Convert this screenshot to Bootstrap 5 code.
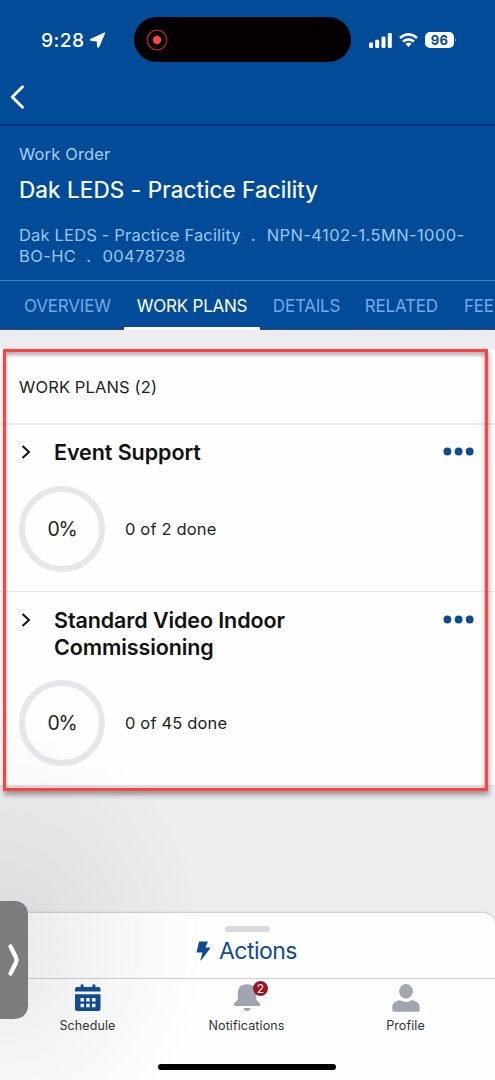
<!DOCTYPE html>
<html lang="en">
<head>
<meta charset="utf-8">
<meta name="viewport" content="width=device-width, initial-scale=1">
<title>Work Order</title>
<link href="https://cdn.jsdelivr.net/npm/bootstrap@5.3.0/dist/css/bootstrap.min.css" rel="stylesheet">
<style>
body{font-family:Inter,"Liberation Sans",sans-serif;width:495px;height:1080px;overflow:hidden;background:#edecef;color:#1f1f21}
svg{display:block;flex:none}
.brand{background:#024b98}
.topbar{height:126px;border-bottom:2px solid #00337c}
.status{height:79px;padding-left:41px}
.clock{font-size:19.3px;font-weight:500;line-height:22px;width:45px;letter-spacing:.35px;padding-top:1px}
.island{width:217px;height:45px;margin-left:28px;padding-left:12px;background:#040002}
.signal{margin-left:18px;margin-top:1px}
.wifi{margin-left:7px}
.batt{width:29px;height:16px;border-radius:5px;margin-left:7px;margin-top:1px;background:#fff;color:#024b98;font-size:13px;font-weight:700;line-height:16px;letter-spacing:.3px}
.back{margin-left:9px;margin-top:5px}
.record{padding:18px 19px 0;height:154px}
.kind{font-size:16.5px;line-height:20px;letter-spacing:.15px;color:#a9cdf5}
.ttl{font-size:22.5px;line-height:30px;font-weight:400;-webkit-text-stroke:.2px #fff;margin-top:11px;letter-spacing:.11px}
.sub{font-size:16.5px;line-height:21px;letter-spacing:.17px;color:#9cc5f3;margin-top:19.5px}
.sub .sep{margin:0 11px 0 10px}
.sub .code{letter-spacing:.4px}
.tabs{height:50px;border-top:1px solid #3c7dc2;font-size:17px;line-height:50px;letter-spacing:-.2px;color:#76a9e2;overflow:hidden}
.tabs a{color:inherit;text-decoration:none;flex:none;white-space:nowrap;height:49px;box-shadow:inset 0 -1px #3d4675}
.tabs .on{color:#fff;box-shadow:inset 0 -3px #fff;letter-spacing:-.22px}
.plans{margin-top:19px;height:437px;background:#fefefe;border-bottom:1px solid #e4e3e7}
.phead{height:76px;line-height:76px;padding-left:19px;font-size:16.5px;letter-spacing:.13px;border-bottom:2px solid #ebebed}
.plan{padding:14px 21.5px 0 19px}
.plan + .plan{border-top:1px solid #e8e8ea;padding-top:15px;margin-top:19px}
.nm{font-size:21.5px;font-weight:600;line-height:26.3px;letter-spacing:-.07px;color:#111;margin-left:20px}
.nm.long{letter-spacing:-.1px}
.gauge{margin-top:21px}
.plan + .plan .gauge{margin-top:20px}
.ring{width:86px;height:86px;border:6px solid #e6e6eb;border-radius:50%;font-size:19.5px;letter-spacing:-1.1px;padding-top:1px}
.count{font-size:16.5px;letter-spacing:.15px;margin-left:20px;padding-top:1px}
.frame{left:3px;top:349px;width:485px;height:442px;border:3px solid #fd4343;box-shadow:1px 4px 5px rgba(0,0,0,.36),inset 0 4px 3px rgba(0,0,0,.2),inset -1px 0 4px rgba(0,0,0,.22)}
.shade{left:0;top:700px;width:220px;height:380px;background:radial-gradient(ellipse at 0 64%,rgba(80,78,85,.12),rgba(80,78,85,.04) 40%,rgba(80,78,85,0) 66%)}
.sheet{left:0;top:913px;width:495px;height:167px;background:#fefefe;border-radius:12px 12px 0 0;box-shadow:0 -1px 2px rgba(0,0,0,.16)}
.act{height:66px;padding-top:13px;border-bottom:1px solid #cfcfd3;color:#0d4b94}
.grip{width:45px;height:6px;background:#d9d8dc}
.actlabel{font-size:23px;line-height:30px;letter-spacing:-.52px;margin-top:4px;margin-right:2px}
.item{font-size:12.5px;line-height:16px;letter-spacing:.1px;color:#333336;width:159px;padding-top:5px}
.item svg{margin-bottom:6px}
.alertdot{left:86px;top:2px;width:15px;height:15px;background:#9c1424;font-size:12px;line-height:15px}
.home{left:158px;top:1064px;width:178px;height:6px;background:#000}
.drawer{left:0;top:901px;width:28px;height:118px;border-radius:0 13px 13px 0;background:#7d7b7e}
</style>
</head>
<body class="position-relative">
<header class="brand text-white">
  <div class="topbar">
    <div class="status d-flex align-items-center">
      <span class="clock">9:28</span>
      <svg class="ms-1" width="16" height="16" viewBox="0 0 16 16"><path d="M14.6 1 L1 7.2 Q.2 8.2 1.3 8.5 L7.3 8.9 L7.6 14.6 Q8 15.6 8.8 14.6Z" fill="#fff" stroke="#fff" stroke-width="1.1" stroke-linejoin="round"/></svg>
      <span class="island rounded-pill d-flex align-items-center"><svg width="22" height="22" viewBox="0 0 22 22"><circle cx="11" cy="11" r="9.8" fill="none" stroke="#a52f31" stroke-width="1.3"/><circle cx="11" cy="11" r="4.2" fill="#fb4542"/></svg></span>
      <svg class="signal" width="23" height="15" viewBox="0 0 23 15" fill="#fff"><rect y="9.5" width="4" height="5.5" rx="1.2"/><rect x="6.2" y="6.8" width="4" height="8.2" rx="1.2"/><rect x="12.5" y="3.5" width="4" height="11.5" rx="1.2"/><rect x="18.8" width="4" height="15" rx="1.2"/></svg>
      <svg class="wifi" width="19" height="14" viewBox="0 0 19 14" fill="none" stroke="#fff" stroke-width="2.6"><path d="M1 5 Q9.5 -2.3 18 5M4 8.6 Q9.5 4 15 8.6"/><path d="M6.4 10.8 Q9.5 8.3 12.6 10.8 L9.5 14Z" fill="#fff" stroke="none"/></svg>
      <span class="batt text-center">96</span><svg width="3" height="6" viewBox="0 0 3 6"><path d="M1 1 Q3 3 1 5Z" fill="#7aa6d4"/></svg>
    </div>
    <svg class="back" width="16" height="26" viewBox="0 0 16 26"><path d="M13.5 2.8 L3.2 13 L13.5 23.2" fill="none" stroke="#fff" stroke-width="2.9" stroke-linecap="round" stroke-linejoin="round"/></svg>
  </div>
  <div class="record">
    <div class="kind">Work Order</div>
    <div class="ttl">Dak LEDS - Practice Facility</div>
    <div class="sub text-nowrap">Dak LEDS - Practice Facility<span class="sep">.</span><span class="code">NPN-4102-1.5MN-1000-<br>BO-HC<span class="sep">.</span>00478738</span></div>
  </div>
  <nav class="tabs d-flex">
    <a style="padding:0 13px 0 24px">OVERVIEW</a><a class="on" style="padding:0 13px">WORK PLANS</a><a style="padding:0 12.5px">DETAILS</a><a style="padding:0 12px">RELATED</a><a style="padding-left:14px">FEE</a>
  </nav>
</header>
<main class="plans">
  <div class="phead">WORK PLANS (2)</div>
  <section class="plan">
    <div class="d-flex align-items-start">
      <svg class="mt-1" width="15" height="18" viewBox="0 0 15 18"><path d="M3.5 3 L10 9 L3.5 15" fill="none" stroke="#111" stroke-width="2"/></svg>
      <div class="nm">Event Support</div>
      <svg class="ms-auto" style="margin-top:8px" width="31" height="9" viewBox="0 0 31 9" fill="#0c4a93"><circle cx="4.4" cy="4.5" r="3.9"/><circle cx="15.6" cy="4.5" r="3.9"/><circle cx="26.7" cy="4.5" r="3.9"/></svg>
    </div>
    <div class="gauge d-flex align-items-center"><div class="ring d-flex align-items-center justify-content-center">0%</div><span class="count">0 of 2 done</span></div>
  </section>
  <section class="plan">
    <div class="d-flex align-items-start">
      <svg class="mt-1" width="15" height="18" viewBox="0 0 15 18"><path d="M3.5 3 L10 9 L3.5 15" fill="none" stroke="#111" stroke-width="2"/></svg>
      <div class="nm long">Standard Video Indoor<br>Commissioning</div>
      <svg class="ms-auto" style="margin-top:8px" width="31" height="9" viewBox="0 0 31 9" fill="#0c4a93"><circle cx="4.4" cy="4.5" r="3.9"/><circle cx="15.6" cy="4.5" r="3.9"/><circle cx="26.7" cy="4.5" r="3.9"/></svg>
    </div>
    <div class="gauge d-flex align-items-center"><div class="ring d-flex align-items-center justify-content-center">0%</div><span class="count">0 of 45 done</span></div>
  </section>
</main>
<div class="frame position-absolute"></div>
<footer class="sheet position-absolute">
  <div class="act d-flex flex-column align-items-center">
    <span class="grip rounded-pill"></span>
    <div class="actlabel d-flex align-items-center"><svg width="15" height="20" viewBox="0 0 15 20" style="margin-right:8px"><path d="M3.8 .5 H12 L9.4 6.6 H14 Q14.6 6.8 14.1 7.5 L5.2 19.2 Q4.3 19.8 4.5 18.8 L6.5 11.6 H1.2 Q.5 11.5 .7 10.7 L3 1.1Z" fill="#0d4b94"/></svg>Actions</div>
  </div>
  <nav class="d-flex" style="padding-left:8px">
    <div class="item d-flex flex-column align-items-center">
      <svg width="26" height="28" viewBox="0 0 26 28"><path fill="#0d4b94" fill-rule="evenodd" d="M0 7.5 V5 Q0 3 2 3 H5.6 V1.5 Q5.6 .3 7.1 .3 T8.6 1.5 V3 H17.4 V1.5 Q17.4 .3 18.9 .3 T20.4 1.5 V3 H23.5 Q25.5 3 25.5 5 V7.5ZM0 10.3 H25.5 V25 Q25.5 27 23.5 27 H2 Q0 27 0 25ZM5.5 14 V17.5 H9 V14ZM11.2 14 V17.5 H14.7 V14ZM17 14 V17.5 H20.5 V14ZM5.5 19.7 V23.2 H9 V19.7ZM11.2 19.7 V23.2 H14.7 V19.7ZM17 19.7 V23.2 H20.5 V19.7Z"/></svg>
      Schedule
    </div>
    <div class="item d-flex flex-column align-items-center position-relative">
      <svg width="28" height="28" viewBox="0 0 28 28" fill="#9fa5b3"><path d="M14 .3 Q23 .3 23.2 9 V14 Q23.2 17 26.5 18.8 Q28.4 21.6 26 22 H2 Q-.4 21.6 1.5 18.8 Q4.8 17 4.8 14 V9 Q5 .3 14 .3ZM10.5 24 H17.5 Q17 27 14 27 T10.5 24Z"/></svg>
      Notifications
      <span class="alertdot position-absolute rounded-circle text-white text-center">2</span>
    </div>
    <div class="item d-flex flex-column align-items-center">
      <svg width="28" height="28" viewBox="0 0 28 28"><ellipse cx="14" cy="7.4" rx="6.8" ry="7.3" fill="#a5a8ad"/><path d="M.3 26 V23 Q.5 19 4.5 17.3 L7.8 16 Q14 20.2 20.2 16 L23.5 17.3 Q27.5 19 27.7 23 V26 Q27.6 27.8 26 27.8 H2 Q.4 27.8 .3 26Z" fill="#9fa5b3"/></svg>
      Profile
    </div>
  </nav>
</footer>
<div class="shade position-absolute"></div>
<div class="home position-absolute rounded-pill"></div>
<div class="drawer position-absolute d-flex align-items-center"><svg width="28" height="36" viewBox="0 0 28 36"><path d="M10.5 4.5 L16 15.5 Q17 18 16 20.5 L10.5 31.5" fill="none" stroke="#fff" stroke-width="4.3" stroke-linecap="round" stroke-linejoin="round"/></svg></div>
<script src="https://cdn.jsdelivr.net/npm/bootstrap@5.3.0/dist/js/bootstrap.bundle.min.js"></script>
</body>
</html>
